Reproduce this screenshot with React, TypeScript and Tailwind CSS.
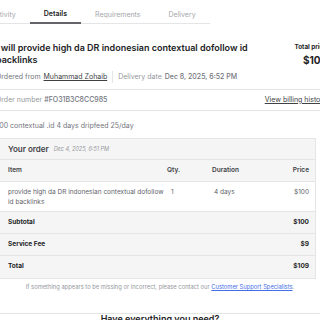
import React from "react";

export default function App() {
  return (
    <div
      className="w-[320px] h-[320px] overflow-hidden bg-white text-[#222325]"
      style={{ fontFamily: "Inter, 'Noto Sans', sans-serif" }}
    >
      <div className="ml-[-4px] w-[340px]">
        {/* Tabs */}
        <div className="ml-[-19px] flex w-fit h-[24px] border-b border-[#e4e5e7] text-[7px]">
          <div className="px-[14px] pt-[7px] flex items-center text-[#a5a6aa]">Activity</div>
          <div className="px-[14px] pt-[7px] flex items-center font-semibold text-[#222325] border-b-2 border-[#62646a] -mb-px">Details</div>
          <div className="px-[14px] pt-[7px] flex items-center text-[#a5a6aa]">Requirements</div>
          <div className="px-[14px] pt-[7px] flex items-center text-[#a5a6aa]">Delivery</div>
        </div>

        {/* Header */}
        <div className="pr-[9px] border-b border-[#e4e5e7] pb-[6px]">
          <div className="flex justify-between mt-[18px]">
            <div className="w-[262px] text-[9px] leading-[12px] font-semibold text-[#222325]">
              I will provide high da DR indonesian contextual dofollow id backlinks
            </div>
            <div className="flex flex-col items-end">
              <div className="text-[6.3px] leading-[10px] font-bold">Total price</div>
              <div className="text-[10px] leading-[12px] font-bold mt-[2px]">$109</div>
            </div>
          </div>
          <div className="flex items-center mt-[5px] text-[7px] leading-[10px] text-[#74767e]">
            <span>Ordered from</span>
            <span className="ml-[3px] text-[#404145] underline">Muhammad Zohaib</span>
            <span className="mx-[5px] h-[12px] w-px bg-[#e4e5e7]"></span>
            <span className="text-[#95979d]">Delivery date</span>
            <span className="ml-[3px] text-[#74767e] font-medium">Dec 8, 2025, 6:52 PM</span>
          </div>
        </div>

        {/* Order number */}
        <div className="pr-[9px] h-[21px] flex items-center justify-between border-b border-[#e4e5e7] text-[7px]">
          <div className="text-[#95979d]">
            Order number <span className="text-[#74767e] font-medium">#FO31B3C8CC985</span>
          </div>
          <div className="text-[#404145] underline">View billing history</div>
        </div>

        {/* Description */}
        <div className="h-[27px] pt-[10px] text-[7px] leading-[10px] text-[#74767e] ml-[-4px]">
          1000 contextual .id 4 days dripfeed 25/day
        </div>

        {/* Order box */}
        <div className="w-[320px] border border-[#e4e5e7] text-[6.5px]">
          <div className="h-[21px] bg-[#f5f5f5] border-b border-[#e4e5e7] flex items-center pl-[11px] gap-[5px]">
            <span className="text-[8px] font-semibold text-[#404145]">Your order</span>
            <span className="text-[5.5px] italic text-[#95979d]">Dec 4, 2025, 6:51 PM</span>
          </div>
          <div className="h-[22px] bg-[#f5f5f5] border-b border-[#e4e5e7] flex items-center pl-[11px] pr-[6px] font-semibold text-[#404145]">
            <div className="w-[159px]">Item</div>
            <div className="w-[45px]">Qty.</div>
            <div className="w-[40px]">Duration</div>
            <div className="flex-1 text-right">Price</div>
          </div>
          <div className="h-[30px] bg-white border-b border-[#e4e5e7] flex items-start pt-[5px] pl-[11px] pr-[6px] leading-[10px] text-[#62646a]">
            <div className="w-[159px] pr-[2px]">provide high da DR indonesian contextual dofollow id backlinks</div>
            <div className="w-[47px] pl-[4px]">1</div>
            <div className="w-[38px]">4 days</div>
            <div className="flex-1 text-right">$100</div>
          </div>
          <div className="h-[22px] bg-[#f5f5f5] border-b border-[#e4e5e7] flex items-center justify-between pl-[11px] pr-[6px] font-bold text-[#222325]">
            <span>Subtotal</span>
            <span>$100</span>
          </div>
          <div className="h-[22px] bg-[#f5f5f5] border-b border-[#e4e5e7] flex items-center justify-between pl-[11px] pr-[6px] font-bold text-[#222325]">
            <span>Service Fee</span>
            <span>$9</span>
          </div>
          <div className="h-[22px] bg-[#f5f5f5] flex items-center justify-between pl-[11px] pr-[6px] font-bold text-[#222325]">
            <span>Total</span>
            <span>$109</span>
          </div>
        </div>

        {/* Footer */}
        <div className="w-[328px] h-[35px] pt-[4px] text-center text-[5.8px] leading-[8px] text-[#95979d] border-b border-[#e4e5e7]">
          If something appears to be missing or incorrect, please contact our{" "}
          <span className="text-[#446ee7] underline">Customer Support Specialists</span>.
        </div>
        <div className="w-[328px] text-center text-[9px] font-semibold text-[#222325] leading-[10px]">
          Have everything you need?
        </div>
      </div>
    </div>
  );
}
